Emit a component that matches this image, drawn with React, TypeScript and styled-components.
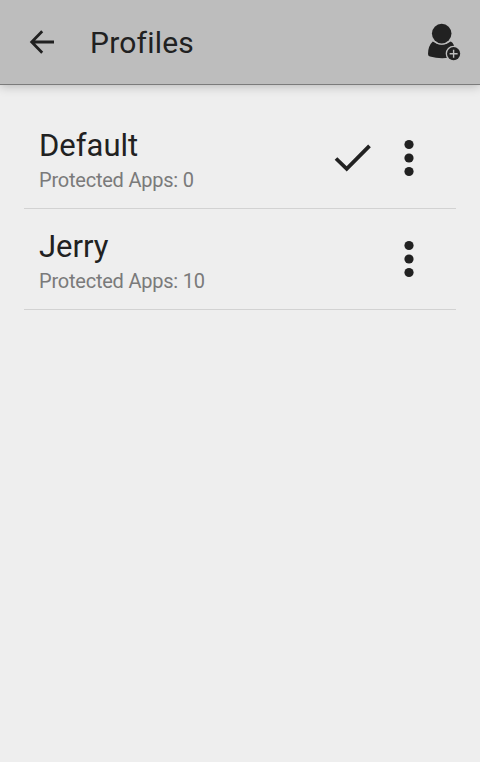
import React from "react";
import styled, { createGlobalStyle } from "styled-components";

const GlobalStyle = createGlobalStyle`
  * { box-sizing: border-box; }
  body { margin: 0; background: #eeeeee; font-family: Roboto, "Liberation Sans", sans-serif; color: #212121; }
`;

const Screen = styled.main`
  display: flex;
  flex-direction: column;
  min-height: 762px;
  background: #eeeeee;
`;

const Toolbar = styled.header`
  display: flex;
  align-items: center;
  height: 85px;
  padding: 0 19px 0 29px;
  background: #bdbdbd;
  border-bottom: 1px solid #7b7b7b;
  box-shadow: 0 1px 10px rgba(0, 0, 0, 0.25);
`;

const IconButton = styled.button`
  display: flex;
  padding: 0;
  border: 0;
  background: none;
  color: #212121;
`;

const Title = styled.h1`
  flex: 1;
  margin: 0 0 0 35px;
  padding-top: 2px;
  font-size: 30px;
  line-height: 36px;
  font-weight: 400;
  letter-spacing: 0.2px;
`;

const ProfileList = styled.ul`
  margin: 23px 24px 0;
  padding: 0;
  list-style: none;
`;

const ProfileRow = styled.li`
  display: flex;
  align-items: center;
  height: 101px;
  padding: 0 42px 0 15px;
  border-bottom: 1px solid #d2d2d2;
`;

const ProfileText = styled.div`
  flex: 1;
  padding-top: 3px;
`;

const ProfileName = styled.div`
  font-size: 31px;
  line-height: 36px;
`;

const ProfileDetail = styled.div`
  margin-top: 4px;
  font-size: 20px;
  line-height: 24px;
  letter-spacing: -0.22px;
  color: #7a7a7a;
`;

const Actions = styled.div`
  display: flex;
  align-items: center;
  gap: 33px;
`;

const BackIcon = () => (
  <svg width="26" height="26" viewBox="0 0 26 26">
    <path d="M13.2 2.2 2.7 13 13.2 23.8M3 13H25" fill="none" stroke="currentColor" strokeWidth="2.8" />
  </svg>
);

const AddProfileIcon = () => (
  <svg width="34" height="38" viewBox="0 0 34 38">
    <path d="M5.8 18.6Q14.7 25 23.8 18.6Q27.5 20.5 28.5 29V33.5Q15 37 3 33.6Q1 33 1 31Q1 23 5.8 18.6Z" fill="currentColor" />
    <circle cx="14.7" cy="10.6" r="11" fill="#bdbdbd" />
    <circle cx="14.7" cy="10.6" r="9.8" fill="currentColor" />
    <circle cx="26.6" cy="30.7" r="7.9" fill="#bdbdbd" />
    <circle cx="26.6" cy="30.7" r="6.6" fill="currentColor" />
    <path d="M22.6 30.7H30.6M26.6 26.7V34.7" stroke="#bdbdbd" strokeWidth="1.4" />
  </svg>
);

const CheckIcon = () => (
  <svg width="37" height="28" viewBox="0 0 37 28">
    <path d="M2 14.5 12.7 24.8 35.5 1.8" fill="none" stroke="currentColor" strokeWidth="3.8" />
  </svg>
);

const MoreIcon = () => (
  <svg width="10" height="38" viewBox="0 0 10 38">
    <circle cx="5" cy="5.5" r="4.6" fill="currentColor" />
    <circle cx="5" cy="19" r="4.6" fill="currentColor" />
    <circle cx="5" cy="32.5" r="4.6" fill="currentColor" />
  </svg>
);

const profiles = [
  { name: "Default", apps: 0, active: true },
  { name: "Jerry", apps: 10, active: false },
];

export default function App() {
  return (
    <Screen>
      <GlobalStyle />
      <Toolbar>
        <IconButton aria-label="Back"><BackIcon /></IconButton>
        <Title>Profiles</Title>
        <IconButton aria-label="Add profile"><AddProfileIcon /></IconButton>
      </Toolbar>
      <ProfileList>
        {profiles.map((profile) => (
          <ProfileRow key={profile.name}>
            <ProfileText>
              <ProfileName>{profile.name}</ProfileName>
              <ProfileDetail>Protected Apps: {profile.apps}</ProfileDetail>
            </ProfileText>
            <Actions>
              {profile.active && <CheckIcon />}
              <IconButton aria-label="More options"><MoreIcon /></IconButton>
            </Actions>
          </ProfileRow>
        ))}
      </ProfileList>
    </Screen>
  );
}
